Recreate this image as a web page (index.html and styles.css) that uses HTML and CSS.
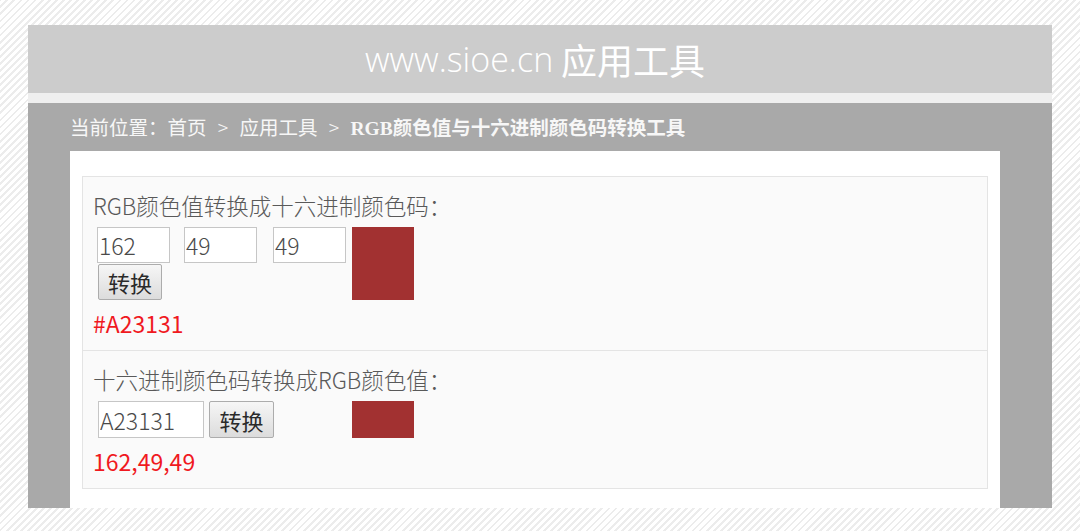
FILE: index.html
```html
<!DOCTYPE html>
<html lang="zh-CN">
<head>
<meta charset="utf-8">
<title>RGB颜色值与十六进制颜色码转换工具</title>
<link rel="stylesheet" href="styles.css">
</head>
<body>
<div class="wrap">
  <div class="header"><span class="site">www.sioe.cn</span>&nbsp;<span class="cn">应用工具</span></div>
  <div class="strip"></div>
  <div class="panel">
    <div class="crumb">当前位置：首页<span class="sep">&gt;</span>应用工具<span class="sep">&gt;</span><b>RGB颜色值与十六进制颜色码转换工具</b></div>
    <div class="card">
      <div class="sec">
        <div class="title">RGB颜色值转换成十六进制颜色码：</div>
        <div class="row">
          <div class="fields">
            <input class="num n1" type="text" value="162">
            <input class="num n2" type="text" value="49">
            <input class="num n3" type="text" value="49">
            <button class="btn b1" type="button">转换</button>
          </div>
          <div class="swatch tall"></div>
        </div>
        <div class="result">#A23131</div>
      </div>
      <div class="sec sec2">
        <div class="title">十六进制颜色码转换成RGB颜色值：</div>
        <div class="row row2">
          <input class="hex" type="text" value="A23131">
          <button class="btn b2" type="button">转换</button>
          <div class="swatch short"></div>
        </div>
        <div class="result r2">162,49,49</div>
      </div>
    </div>
  </div>
</div>
</body>
</html>
```
FILE: styles.css
```css
html, body {
  margin: 0;
  padding: 0;
}
body {
  width: 1080px;
  height: 531px;
  overflow: hidden;
  background: repeating-linear-gradient(-45deg, #ffffff 0 3px, #ececec 3px 5px);
  font-family: "Noto Sans CJK SC", "Noto Sans", sans-serif;
}
.wrap {
  margin: 25px 28px 0;
}
.header {
  height: 68px;
  background: #cccccc;
  color: #ffffff;
  display: flex;
  align-items: center;
  justify-content: center;
  font-size: 35px;
  padding-right: 10px;
  box-sizing: border-box;
}
.header .site {
  font-family: "Open Sans", "Noto Sans CJK SC", sans-serif;
  font-weight: 300;
  font-size: 34px;
}
.header .cn {
  font-weight: 400;
  font-size: 36px;
}
.strip {
  height: 10px;
  background: #efefef;
}
.panel {
  background: #a9a9a9;
  padding: 0 52px 0 42px;
}
.crumb {
  height: 48px;
  line-height: 48px;
  color: #f7f7f7;
  font-size: 19.5px;
  font-family: "Liberation Serif", "Noto Sans CJK SC", serif;
  white-space: nowrap;
}
.crumb .sep {
  display: inline-block;
  width: 33px;
  text-align: center;
  font-family: "Noto Sans CJK SC", sans-serif;
  font-weight: 300;
}
.crumb b {
  font-weight: 700;
}
.card {
  background: #ffffff;
  padding: 25px 12px 19px;
}
.sec {
  border: 1px solid #e4e4e4;
  background: #fafafa;
  padding: 13px 10px 12px;
  color: #595959;
}
.sec2 {
  border-top: none;
  padding-bottom: 12px;
}
.title {
  font-size: 22.5px;
  line-height: 30px;
  font-weight: 300;
  white-space: nowrap;
}
.row {
  display: flex;
  align-items: flex-start;
  margin-top: 7px;
}
.fields {
  display: flex;
  flex-wrap: wrap;
  width: 249px;
  margin-left: 4px;
}
.num, .hex {
  box-sizing: border-box;
  height: 36px;
  border: 1px solid #c6c6c6;
  background: #ffffff;
  font-family: "Noto Sans CJK SC", sans-serif;
  font-weight: 300;
  font-size: 23px;
  color: #4a4a4a;
  padding: 0 1px;
  margin: 0;
  outline: none;
}
.num {
  width: 73px;
}
.n1 { margin-right: 14px; }
.n2 { margin-right: 16px; }
.hex {
  width: 106px;
  height: 37px;
  margin-left: 5px;
}
.btn {
  box-sizing: border-box;
  height: 36px;
  border: 1px solid #acacac;
  border-radius: 2px;
  background: linear-gradient(#f6f6f6, #dcdcdc);
  font-family: "Noto Sans CJK SC", sans-serif;
  font-size: 22px;
  color: #2a2a2a;
  padding: 0;
  margin: 0;
  line-height: 1;
}
.b1 {
  width: 64px;
  margin: 1px 0 0 1px;
}
.b2 {
  width: 65px;
  height: 37px;
  margin-left: 5px;
}
.swatch {
  background: #a23131;
  width: 62px;
}
.tall {
  height: 73px;
  margin-left: 6px;
}
.short {
  height: 37px;
  margin-left: 78px;
}
.result {
  margin-top: 8px;
  font-size: 23px;
  line-height: 30px;
  color: #f0191f;
}
.r2 {
  margin-top: 8px;
}
```
